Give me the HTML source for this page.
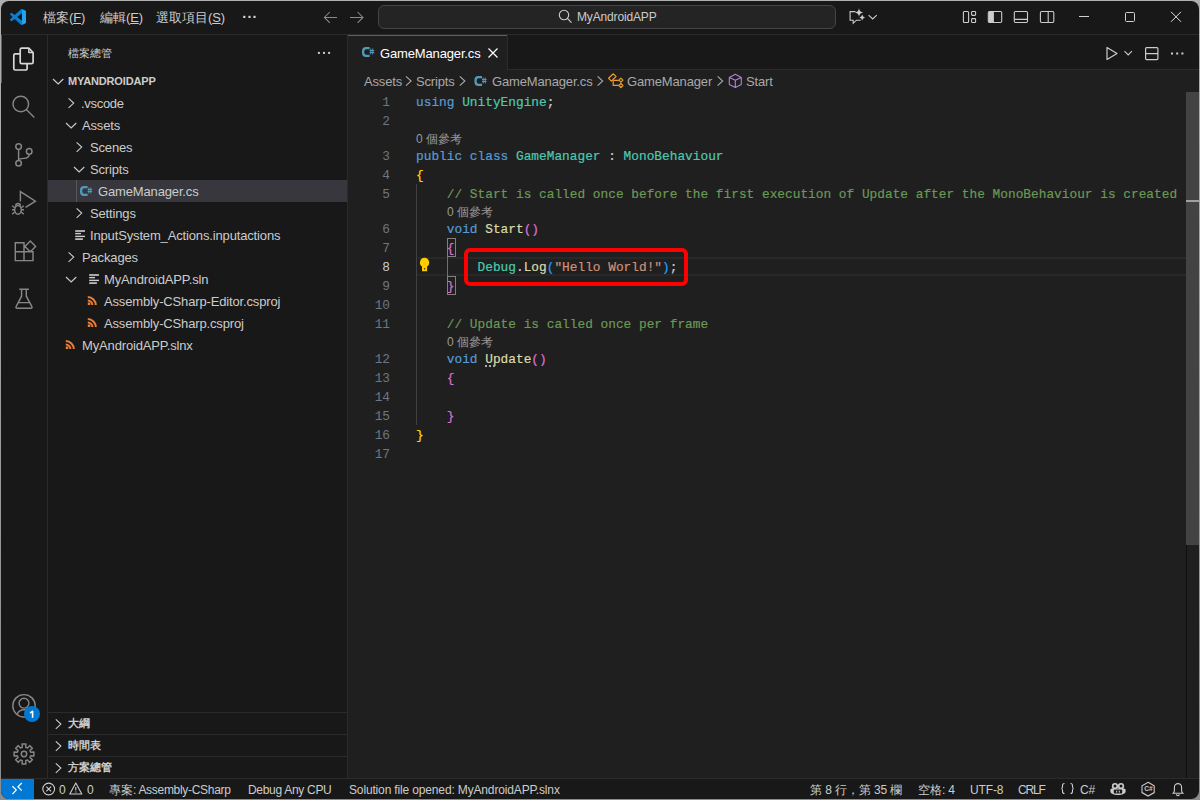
<!DOCTYPE html>
<html><head><meta charset="utf-8">
<style>
*{margin:0;padding:0;box-sizing:border-box}
html,body{width:1200px;height:800px;overflow:hidden;background:linear-gradient(#b0b0b0,#8c8c8c)}
body{font-family:"Liberation Sans",sans-serif;font-size:13px;color:#cccccc;position:relative;letter-spacing:-0.15px}
.mono{letter-spacing:0}
u{text-decoration-thickness:1px;text-underline-offset:1px}
.win{position:absolute;left:1px;top:1px;width:1198px;height:798px;background:#181818;border-radius:8px;overflow:hidden}
.c{position:absolute;left:-1px;top:-1px;width:1200px;height:800px}
.a{position:absolute;white-space:pre;line-height:1}
svg{position:absolute;overflow:visible}
.mono{font-family:"Liberation Mono",monospace}
.ic{fill:none;stroke:#868686;stroke-width:1.2}
.cj{display:inline-block;width:1em;letter-spacing:0;text-align:left}
.cg i{display:inline-block;width:7.7px;font-style:normal;overflow:visible}
.cg{-webkit-text-stroke:0.2px currentColor}
</style></head><body>
<div class="win"><div class="c">
<!-- ===== TITLE BAR ===== -->
<div class="a" style="left:0;top:34px;width:1200px;height:1px;background:#2b2b2b"></div>
<svg style="left:10px;top:9px" width="16" height="16" viewBox="0 0 100 100">
<path fill="#0a7dd0" d="M96.46 10.8L75.86.87a6.23 6.23 0 0 0-7.1 1.2L29.33 38.06 12.15 25.02a4.16 4.16 0 0 0-5.32.24L1.36 30.24a4.17 4.17 0 0 0 0 6.16L16.26 50 1.36 63.6a4.17 4.17 0 0 0 0 6.16l5.47 4.98a4.16 4.16 0 0 0 5.32.24l17.18-13.04 39.43 35.99a6.22 6.22 0 0 0 7.1 1.2l20.6-9.92A6.25 6.25 0 0 0 100 83.6V16.4a6.25 6.25 0 0 0-3.54-5.6zM75.02 72.7L45.1 50l29.92-22.7v45.4z"/>
<path fill="#22a3f0" d="M75.86.87L96.46 10.8A6.25 6.25 0 0 1 100 16.4V83.6a6.25 6.25 0 0 1-3.54 5.6L75.86 99.13a6.2 6.2 0 0 1-1 .3V.57a6.2 6.2 0 0 1 1 .3z"/>
</svg>
<div class="a" style="left:43px;top:11px;font-size:13px;color:#cccccc"><span class="cj">檔</span><span class="cj">案</span>(<u>F</u>)</div>
<div class="a" style="left:100px;top:11px;font-size:13px;color:#cccccc"><span class="cj">編</span><span class="cj">輯</span>(<u>E</u>)</div>
<div class="a" style="left:156px;top:11px;font-size:13px;color:#cccccc"><span class="cj">選</span><span class="cj">取</span><span class="cj">項</span><span class="cj">目</span>(<u>S</u>)</div>
<svg style="left:0;top:0" width="1" height="1"><g fill="#d0d0d0"><rect x="243.2" y="15.8" width="2.2" height="2.2"/><rect x="248.4" y="15.8" width="2.2" height="2.2"/><rect x="253.4" y="15.8" width="2.2" height="2.2"/></g>
<path d="M337 17.4H324.8M329.8 12L324.4 17.4 329.8 22.8M350 17.4H362.6M357.6 12L363 17.4 357.6 22.8" fill="none" stroke="#8b8b8b" stroke-width="1.05"/></svg>
<!-- search -->
<div class="a" style="left:378px;top:5px;width:458px;height:24px;border:1px solid #454545;background:#242424;border-radius:6px"></div>
<svg style="left:0;top:0" width="1" height="1"><circle cx="564" cy="15" r="4.7" fill="none" stroke="#cccccc" stroke-width="1.1"/><path d="M567.4 18.4L571.5 22.6" stroke="#cccccc" stroke-width="1.2"/></svg>
<div class="a" style="left:577px;top:11px;font-size:12px;color:#cccccc">MyAndroidAPP</div>
<!-- copilot -->
<svg style="left:0;top:0" width="1" height="1">
<path d="M855.5 11.6H850.1v8.6h3.1v3.1l3.2-3.1h4.3" fill="none" stroke="#cccccc" stroke-width="1.1"/>
<path d="M859 8.2Q859.5 12 863.2 12.5Q859.5 13 859 16.8Q858.5 13 854.8 12.5Q858.5 12 859 8.2z" fill="#cccccc"/>
<path d="M862.2 14.6Q862.6 17.1 865 17.5Q862.6 17.9 862.2 20.4Q861.8 17.9 859.4 17.5Q861.8 17.1 862.2 14.6z" fill="#cccccc"/>
<path d="M868.6 15.2l4.1 3.8 4.1-3.8" fill="none" stroke="#cccccc" stroke-width="1.1"/>
</svg>
<!-- layout icons -->
<svg style="left:0;top:0" width="1" height="1"><g fill="none" stroke="#cccccc" stroke-width="1.1">
<rect x="963.4" y="11.5" width="5.2" height="11" rx="1"/><rect x="971.6" y="11.5" width="4" height="3.9" rx=".8"/><rect x="971.6" y="18.6" width="4" height="3.9" rx=".8"/>
<rect x="988.3" y="11.5" width="13.4" height="11" rx="1.2"/>
<rect x="1014.3" y="11.5" width="13.2" height="11" rx="1.2"/><path d="M1014.5 19.4H1027.3"/>
<rect x="1040.4" y="11.5" width="13.4" height="11" rx="1.2"/><path d="M1048.2 11.7V22.3"/>
</g><rect x="988.6" y="11.8" width="5.3" height="10.4" fill="#cccccc"/></svg>
<!-- window controls -->
<div class="a" style="left:1079px;top:16px;width:10px;height:1px;background:#d0d0d0"></div>
<div class="a" style="left:1125px;top:12px;width:10px;height:10px;border:1px solid #d0d0d0;border-radius:1.5px"></div>
<svg style="left:0;top:0" width="1" height="1"><path d="M1171 11.8l10 10M1181 11.8l-10 10" stroke="#e0e0e0" stroke-width="1"/></svg>

<!-- ===== ACTIVITY BAR ===== -->
<div class="a" style="left:47px;top:35px;width:1px;height:743px;background:#2b2b2b"></div>
<div class="a" style="left:0;top:35px;width:2px;height:48px;background:#0078d4"></div>
<svg style="left:0;top:0" width="1" height="1"><g fill="none" stroke="#d7d7d7" stroke-width="1.7" stroke-linejoin="round"><path d="M21.7 48.2H28.8L33.1 52.5V62.2A1.5 1.5 0 0 1 31.6 63.7H21.7A1.5 1.5 0 0 1 20.2 62.2V49.7A1.5 1.5 0 0 1 21.7 48.2Z"/><path d="M28.8 48.2V52.5H33.1" stroke-width="1.4"/><path d="M20.2 53.9H15.3A1.5 1.5 0 0 0 13.8 55.4V68.5A1.5 1.5 0 0 0 15.3 70H25.6A1.5 1.5 0 0 0 27.1 68.5V63.7"/></g></svg>
<svg style="left:0;top:0" width="48" height="800">
<g fill="none" stroke="#868686" stroke-width="1.45">
<circle cx="20.8" cy="104" r="7.8"/><path d="M26.3 109.5L34.3 117.6"/>
<circle cx="18.6" cy="146.6" r="2.8"/><circle cx="29.2" cy="151.4" r="2.8"/><circle cx="18.6" cy="163.2" r="2.8"/><path d="M18.6 149.4V160.4M29.2 154.2c0 3-2.5 4-5.5 4.2-3 .2-5 .6-5.1 2"/>
<path d="M20.4 201.4V191.6L35.4 201.2 25.6 207.4"/>
<ellipse cx="18" cy="209.8" rx="3.3" ry="4.4"/><path d="M15.6 205.8a2.4 2.4 0 0 1 4.8 0M14.7 207.8L12.2 205.8M14.7 209.8H12M14.7 212L12.2 214.2M21.3 207.8L23.8 205.8M21.3 209.8H24M21.3 212L23.8 214.2"/>
<path d="M15.3 242.8H24V260.6H15.3zM15.3 251.8H33V260.6H24M30.3 241l5.3 5.4-5.3 5.4-5.4-5.4z"/>
<path d="M19.3 289.2H28.9M21.6 289.2V296.2L16.1 306.6A1 1 0 0 0 17 308.2H31A1 1 0 0 0 31.9 306.6L26.3 296.2V289.2M18.7 302.6H29.3"/>
<circle cx="24" cy="705.8" r="11.2"/><circle cx="24" cy="703.2" r="4.9"/><path d="M16.9 714.3c1.5-3 4-4.6 7.1-4.6s5.6 1.6 7.1 4.6"/>
<path d="M22.33 747.30 L22.07 744.09 L25.93 744.09 L25.67 747.30 L27.55 748.09 L29.65 745.63 L32.37 748.35 L29.91 750.45 L30.70 752.33 L33.91 752.07 L33.91 755.93 L30.70 755.67 L29.91 757.55 L32.37 759.65 L29.65 762.37 L27.55 759.91 L25.67 760.70 L25.93 763.91 L22.07 763.91 L22.33 760.70 L20.45 759.91 L18.35 762.37 L15.63 759.65 L18.09 757.55 L17.30 755.67 L14.09 755.93 L14.09 752.07 L17.30 752.33 L18.09 750.45 L15.63 748.35 L18.35 745.63 L20.45 748.09Z" stroke-linejoin="round"/><circle cx="24" cy="754" r="2.7"/>
</g>
<circle cx="32" cy="714" r="8" fill="#0078d4"/>
</svg>
<svg style="left:0;top:0" width="1" height="1"><path d="M32.6 717.8V711.4L30.1 713" fill="none" stroke="#ffffff" stroke-width="1.6" stroke-linejoin="round"/></svg>

<!-- ===== SIDEBAR ===== -->
<div class="a" style="left:347px;top:35px;width:1px;height:743px;background:#2b2b2b"></div>
<div class="a" style="left:68px;top:48px;font-size:11px;color:#cccccc"><span class="cj">檔</span><span class="cj">案</span><span class="cj">總</span><span class="cj">管</span></div>
<svg style="left:0;top:0" width="1" height="1"><g fill="#cccccc"><rect x="317.9" y="51.9" width="2" height="2"/><rect x="323" y="51.9" width="2" height="2"/><rect x="328.1" y="51.9" width="2" height="2"/></g></svg>

<!-- tree -->
<div class="a" style="left:48px;top:180px;width:299px;height:22px;background:#37373d"></div>
<div class="a" style="left:76px;top:180px;width:1px;height:22px;background:#585858"></div>
<svg style="left:0;top:0" width="348" height="800">
<g fill="none" stroke="#cccccc" stroke-width="1.1">
<path d="M53 79l5.15 5 5.15-5"/><path d="M68.6 98.3l5.1 4.75-5.1 4.75"/><path d="M66 123l5.15 5 5.15-5"/><path d="M76.6 142.3l5.1 4.75-5.1 4.75"/><path d="M74 167l5.15 5 5.15-5"/><path d="M76.6 208.3l5.1 4.75-5.1 4.75"/><path d="M68.6 252.3l5.1 4.75-5.1 4.75"/><path d="M66 277l5.15 5 5.15-5"/>
</g>
<g fill="#cccccc">
<rect x="75.2" y="230.2" width="9.8" height="1.6"/><rect x="75.2" y="232.9" width="5.8" height="1.4"/><rect x="75.2" y="235.7" width="9.8" height="1.4"/><rect x="75.2" y="238.3" width="7.7" height="1.6"/>
<rect x="89.2" y="274.2" width="9.8" height="1.6"/><rect x="89.2" y="276.9" width="5.8" height="1.4"/><rect x="89.2" y="279.7" width="9.8" height="1.4"/><rect x="89.2" y="282.3" width="7.7" height="1.6"/>
</g>
<path fill="#ee7d35" transform="translate(87.8,296.8)" d="M0 5.800000000000001H2.5V8.3H0ZM0 2.70A5.6 5.6 0 0 1 5.6 8.3H3.6A3.6 3.6 0 0 0 0 4.70ZM0 -0.70A9 9 0 0 1 9 8.3H7A7 7 0 0 0 0 1.30Z"/><path fill="#ee7d35" transform="translate(87.8,318.8)" d="M0 5.800000000000001H2.5V8.3H0ZM0 2.70A5.6 5.6 0 0 1 5.6 8.3H3.6A3.6 3.6 0 0 0 0 4.70ZM0 -0.70A9 9 0 0 1 9 8.3H7A7 7 0 0 0 0 1.30Z"/><path fill="#ee7d35" transform="translate(65.8,340.8)" d="M0 5.800000000000001H2.5V8.3H0ZM0 2.70A5.6 5.6 0 0 1 5.6 8.3H3.6A3.6 3.6 0 0 0 0 4.70ZM0 -0.70A9 9 0 0 1 9 8.3H7A7 7 0 0 0 0 1.30Z"/>
<g transform="translate(80,186)"><path fill="#519aba" d="M7.6 0H4A4 4.2 0 0 0 0 4.2V5.8A4 4.2 0 0 0 4 10H7.6V7.7H4.3A2 2 0 0 1 2.3 5.7V4.3A2 2 0 0 1 4.3 2.3H7.6Z"/><path stroke="#519aba" stroke-width="1" d="M8.8 1.6V7.4M10.8 1.6V7.4M7.6 3.5H12.2M7.6 5.5H12.2"/></g>
<g fill="none" stroke="#cccccc" stroke-width="1.1">
<path d="M55.8 719.3l5.1 4.75-5.1 4.75"/><path d="M55.8 741.3l5.1 4.75-5.1 4.75"/><path d="M55.8 763.3l5.1 4.75-5.1 4.75"/></g>
</svg>
<div class="a" style="left:68px;top:76px;font-size:11px;font-weight:bold;color:#cccccc">MYANDROIDAPP</div>
<div class="a" style="left:81px;top:97px;letter-spacing:-0.3px">.vscode</div>
<div class="a" style="left:82px;top:119px">Assets</div>
<div class="a" style="left:90px;top:141px">Scenes</div>
<div class="a" style="left:90px;top:163px">Scripts</div>
<div class="a" style="left:98px;top:185px">GameManager.cs</div>
<div class="a" style="left:90px;top:207px">Settings</div>
<div class="a" style="left:90px;top:229px">InputSystem_Actions.inputactions</div>
<div class="a" style="left:82px;top:251px">Packages</div>
<div class="a" style="left:104px;top:273px">MyAndroidAPP.sln</div>
<div class="a" style="left:104px;top:295px">Assembly-CSharp-Editor.csproj</div>
<div class="a" style="left:104px;top:317px">Assembly-CSharp.csproj</div>
<div class="a" style="left:82px;top:339px">MyAndroidAPP.slnx</div>
<!-- bottom panes -->
<div class="a" style="left:48px;top:712px;width:299px;height:1px;background:#2b2b2b"></div>
<div class="a" style="left:48px;top:734px;width:299px;height:1px;background:#2b2b2b"></div>
<div class="a" style="left:48px;top:756px;width:299px;height:1px;background:#2b2b2b"></div>
<div class="a" style="left:68px;top:718px;font-size:11px;font-weight:bold"><span class="cj">大</span><span class="cj">綱</span></div>
<div class="a" style="left:68px;top:740px;font-size:11px;font-weight:bold"><span class="cj">時</span><span class="cj">間</span><span class="cj">表</span></div>
<div class="a" style="left:68px;top:762px;font-size:11px;font-weight:bold"><span class="cj">方</span><span class="cj">案</span><span class="cj">總</span><span class="cj">管</span></div>

<!-- ===== EDITOR ===== -->
<div class="a" style="left:348px;top:69px;width:852px;height:1px;background:#2b2b2b"></div>
<div class="a" style="left:348px;top:70px;width:852px;height:708px;background:#1f1f1f"></div>
<div class="a" style="left:348px;top:35px;width:159px;height:35px;background:#1f1f1f;border-top:1px solid #0078d4"></div>
<div class="a" style="left:507px;top:35px;width:1px;height:35px;background:#2b2b2b"></div>
<svg style="left:0;top:0" width="1200" height="100">
<g transform="translate(362,47)"><path fill="#519aba" d="M7.6 0H4A4 4.2 0 0 0 0 4.2V5.8A4 4.2 0 0 0 4 10H7.6V7.7H4.3A2 2 0 0 1 2.3 5.7V4.3A2 2 0 0 1 4.3 2.3H7.6Z"/><path stroke="#519aba" stroke-width="1" d="M8.8 1.6V7.4M10.8 1.6V7.4M7.6 3.5H12.2M7.6 5.5H12.2"/></g>
<path d="M488.5 48.5l9 9M497.5 48.5l-9 9" stroke="#ffffff" stroke-width="1.2"/>
<path d="M1107 47.5v12l10-6z" fill="none" stroke="#cccccc" stroke-width="1.2" stroke-linejoin="round"/>
<path d="M1124.5 51.2l3.7 3.7 3.7-3.7" fill="none" stroke="#cccccc" stroke-width="1.1"/>
<rect x="1145.6" y="47.6" width="12.3" height="12" rx="1" fill="none" stroke="#cccccc" stroke-width="1.2"/>
<path d="M1146 53.6h12" stroke="#cccccc" stroke-width="1.2"/>
<g fill="#cccccc"><rect x="1171" y="52.5" width="2" height="2"/><rect x="1176.2" y="52.5" width="2" height="2"/><rect x="1181.4" y="52.5" width="2" height="2"/></g>
<!-- breadcrumbs -->
<g fill="none" stroke="#a9a9a9" stroke-width="1.1">
<path d="M406 76.3l5.1 4.7-5.1 4.7M459.8 76.3l5.1 4.7-5.1 4.7M597.6 76.3l5.1 4.7-5.1 4.7M717.6 76.3l5.1 4.7-5.1 4.7"/>
</g>
<g transform="translate(474.4,76)"><path fill="#519aba" d="M7.6 0H4A4 4.2 0 0 0 0 4.2V5.8A4 4.2 0 0 0 4 10H7.6V7.7H4.3A2 2 0 0 1 2.3 5.7V4.3A2 2 0 0 1 4.3 2.3H7.6Z"/><path stroke="#519aba" stroke-width="1" d="M8.8 1.6V7.4M10.8 1.6V7.4M7.6 3.5H12.2M7.6 5.5H12.2"/></g>
<g fill="none" stroke="#ee9d28" stroke-width="1.2" stroke-linejoin="round">
<path d="M608.6 78.3l4.7-4.5 2.7 2.7-4.6 4.6z"/>
<path d="M620.9 78.1l2 2-2 2-2-2z M620.9 83.5l2 2-2 2-2-2z"/>
<path d="M613.2 80.6V85.4H618.9M613.2 80.4H618.9"/>
</g>
<g fill="none" stroke="#b180d7" stroke-width="1.1" stroke-linejoin="round">
<path d="M735.3 74.3l6 3.1v7l-6 3-6-3v-7z M729.3 77.4l6 2.9 6-2.9 M735.3 80.3v7"/>
</g>
</svg>
<div class="a" style="left:380px;top:47px;font-size:13px;color:#ffffff">GameManager.cs</div>
<div class="a" style="left:364px;top:75px;font-size:13px;color:#a9a9a9">Assets</div>
<div class="a" style="left:416px;top:75px;font-size:13px;color:#a9a9a9">Scripts</div>
<div class="a" style="left:492px;top:75px;font-size:13px;color:#a9a9a9">GameManager.cs</div>
<div class="a" style="left:627px;top:75px;font-size:13px;color:#a9a9a9">GameManager</div>
<div class="a" style="left:746px;top:75px;font-size:13px;color:#a9a9a9">Start</div>

<!-- line highlight -->
<div class="a" style="left:417px;top:257px;width:769px;height:19px;border-top:2px solid #282828;border-bottom:2px solid #282828"></div>
<!-- indent guides -->
<div class="a" style="left:416px;top:184px;width:1px;height:241px;background:#404040"></div>
<div class="a" style="left:447px;top:256px;width:1px;height:21px;background:#707070"></div>
<!-- bracket match -->
<div class="a" style="left:447px;top:238px;width:9px;height:19px;border:1px solid #808080"></div>
<div class="a" style="left:447px;top:276px;width:9px;height:19px;border:1px solid #808080"></div>
<!-- lightbulb -->
<svg style="left:0;top:0" width="1" height="1"><path d="M424.6 257.8A4.7 4.7 0 0 0 422 266.4V271.2H427.1V266.4A4.7 4.7 0 0 0 424.6 257.8Z" fill="#ffcc00"/><rect x="424" y="268.2" width="1.2" height="1.2" fill="#1f1f1f"/></svg>
<!-- line numbers -->

<div class="a mono" style="left:349px;top:93px;width:41px;height:19px;text-align:right;font-size:12.8px;line-height:19px;color:#6e7681">1</div>
<div class="a mono" style="left:349px;top:112px;width:41px;height:19px;text-align:right;font-size:12.8px;line-height:19px;color:#6e7681">2</div>
<div class="a mono" style="left:349px;top:147px;width:41px;height:19px;text-align:right;font-size:12.8px;line-height:19px;color:#6e7681">3</div>
<div class="a mono" style="left:349px;top:166px;width:41px;height:19px;text-align:right;font-size:12.8px;line-height:19px;color:#6e7681">4</div>
<div class="a mono" style="left:349px;top:185px;width:41px;height:19px;text-align:right;font-size:12.8px;line-height:19px;color:#6e7681">5</div>
<div class="a mono" style="left:349px;top:220px;width:41px;height:19px;text-align:right;font-size:12.8px;line-height:19px;color:#6e7681">6</div>
<div class="a mono" style="left:349px;top:239px;width:41px;height:19px;text-align:right;font-size:12.8px;line-height:19px;color:#6e7681">7</div>
<div class="a mono" style="left:349px;top:258px;width:41px;height:19px;text-align:right;font-size:12.8px;line-height:19px;color:#cccccc">8</div>
<div class="a mono" style="left:349px;top:277px;width:41px;height:19px;text-align:right;font-size:12.8px;line-height:19px;color:#6e7681">9</div>
<div class="a mono" style="left:349px;top:296px;width:41px;height:19px;text-align:right;font-size:12.8px;line-height:19px;color:#6e7681">10</div>
<div class="a mono" style="left:349px;top:315px;width:41px;height:19px;text-align:right;font-size:12.8px;line-height:19px;color:#6e7681">11</div>
<div class="a mono" style="left:349px;top:350px;width:41px;height:19px;text-align:right;font-size:12.8px;line-height:19px;color:#6e7681">12</div>
<div class="a mono" style="left:349px;top:369px;width:41px;height:19px;text-align:right;font-size:12.8px;line-height:19px;color:#6e7681">13</div>
<div class="a mono" style="left:349px;top:388px;width:41px;height:19px;text-align:right;font-size:12.8px;line-height:19px;color:#6e7681">14</div>
<div class="a mono" style="left:349px;top:407px;width:41px;height:19px;text-align:right;font-size:12.8px;line-height:19px;color:#6e7681">15</div>
<div class="a mono" style="left:349px;top:426px;width:41px;height:19px;text-align:right;font-size:12.8px;line-height:19px;color:#6e7681">16</div>
<div class="a mono" style="left:349px;top:445px;width:41px;height:19px;text-align:right;font-size:12.8px;line-height:19px;color:#6e7681">17</div>
<div class="a mono cg" style="left:416px;top:93px;height:19px;font-size:12.8px;line-height:19px"><span style="color:#569cd6"><i>u</i><i>s</i><i>i</i><i>n</i><i>g</i></span><i> </i><span style="color:#4ec9b0"><i>U</i><i>n</i><i>i</i><i>t</i><i>y</i><i>E</i><i>n</i><i>g</i><i>i</i><i>n</i><i>e</i></span><span style="color:#cccccc"><i>;</i></span></div>
<div class="a mono cg" style="left:416px;top:147px;height:19px;font-size:12.8px;line-height:19px"><span style="color:#569cd6"><i>p</i><i>u</i><i>b</i><i>l</i><i>i</i><i>c</i></span><i> </i><span style="color:#569cd6"><i>c</i><i>l</i><i>a</i><i>s</i><i>s</i></span><i> </i><span style="color:#4ec9b0"><i>G</i><i>a</i><i>m</i><i>e</i><i>M</i><i>a</i><i>n</i><i>a</i><i>g</i><i>e</i><i>r</i></span><span style="color:#cccccc"><i> </i><i>:</i><i> </i></span><span style="color:#4ec9b0"><i>M</i><i>o</i><i>n</i><i>o</i><i>B</i><i>e</i><i>h</i><i>a</i><i>v</i><i>i</i><i>o</i><i>u</i><i>r</i></span></div>
<div class="a mono cg" style="left:416px;top:166px;height:19px;font-size:12.8px;line-height:19px"><span style="color:#ffd700"><i>{</i></span></div>
<div class="a mono cg" style="left:416px;top:185px;height:19px;font-size:12.8px;line-height:19px"><i> </i><i> </i><i> </i><i> </i><span style="color:#6a9955"><i>/</i><i>/</i><i> </i><i>S</i><i>t</i><i>a</i><i>r</i><i>t</i><i> </i><i>i</i><i>s</i><i> </i><i>c</i><i>a</i><i>l</i><i>l</i><i>e</i><i>d</i><i> </i><i>o</i><i>n</i><i>c</i><i>e</i><i> </i><i>b</i><i>e</i><i>f</i><i>o</i><i>r</i><i>e</i><i> </i><i>t</i><i>h</i><i>e</i><i> </i><i>f</i><i>i</i><i>r</i><i>s</i><i>t</i><i> </i><i>e</i><i>x</i><i>e</i><i>c</i><i>u</i><i>t</i><i>i</i><i>o</i><i>n</i><i> </i><i>o</i><i>f</i><i> </i><i>U</i><i>p</i><i>d</i><i>a</i><i>t</i><i>e</i><i> </i><i>a</i><i>f</i><i>t</i><i>e</i><i>r</i><i> </i><i>t</i><i>h</i><i>e</i><i> </i><i>M</i><i>o</i><i>n</i><i>o</i><i>B</i><i>e</i><i>h</i><i>a</i><i>v</i><i>i</i><i>o</i><i>u</i><i>r</i><i> </i><i>i</i><i>s</i><i> </i><i>c</i><i>r</i><i>e</i><i>a</i><i>t</i><i>e</i><i>d</i></span></div>
<div class="a mono cg" style="left:416px;top:220px;height:19px;font-size:12.8px;line-height:19px"><i> </i><i> </i><i> </i><i> </i><span style="color:#569cd6"><i>v</i><i>o</i><i>i</i><i>d</i></span><i> </i><span style="color:#dcdcaa"><i>S</i><i>t</i><i>a</i><i>r</i><i>t</i></span><span style="color:#da70d6"><i>(</i><i>)</i></span></div>
<div class="a mono cg" style="left:416px;top:239px;height:19px;font-size:12.8px;line-height:19px"><i> </i><i> </i><i> </i><i> </i><span style="color:#da70d6"><i>{</i></span></div>
<div class="a mono cg" style="left:416px;top:258px;height:19px;font-size:12.8px;line-height:19px"><i> </i><i> </i><i> </i><i> </i><i> </i><i> </i><i> </i><i> </i><span style="color:#4ec9b0"><i>D</i><i>e</i><i>b</i><i>u</i><i>g</i></span><span style="color:#cccccc"><i>.</i></span><span style="color:#dcdcaa"><i>L</i><i>o</i><i>g</i></span><span style="color:#179fff"><i>(</i></span><span style="color:#ce9178"><i>&quot;</i><i>H</i><i>e</i><i>l</i><i>l</i><i>o</i><i> </i><i>W</i><i>o</i><i>r</i><i>l</i><i>d</i><i>!</i><i>&quot;</i></span><span style="color:#179fff"><i>)</i></span><span style="color:#cccccc"><i>;</i></span></div>
<div class="a mono cg" style="left:416px;top:277px;height:19px;font-size:12.8px;line-height:19px"><i> </i><i> </i><i> </i><i> </i><span style="color:#da70d6"><i>}</i></span></div>
<div class="a mono cg" style="left:416px;top:315px;height:19px;font-size:12.8px;line-height:19px"><i> </i><i> </i><i> </i><i> </i><span style="color:#6a9955"><i>/</i><i>/</i><i> </i><i>U</i><i>p</i><i>d</i><i>a</i><i>t</i><i>e</i><i> </i><i>i</i><i>s</i><i> </i><i>c</i><i>a</i><i>l</i><i>l</i><i>e</i><i>d</i><i> </i><i>o</i><i>n</i><i>c</i><i>e</i><i> </i><i>p</i><i>e</i><i>r</i><i> </i><i>f</i><i>r</i><i>a</i><i>m</i><i>e</i></span></div>
<div class="a mono cg" style="left:416px;top:350px;height:19px;font-size:12.8px;line-height:19px"><i> </i><i> </i><i> </i><i> </i><span style="color:#569cd6"><i>v</i><i>o</i><i>i</i><i>d</i></span><i> </i><span style="color:#dcdcaa"><i>U</i><i>p</i><i>d</i><i>a</i><i>t</i><i>e</i></span><span style="color:#da70d6"><i>(</i><i>)</i></span></div>
<div class="a mono cg" style="left:416px;top:369px;height:19px;font-size:12.8px;line-height:19px"><i> </i><i> </i><i> </i><i> </i><span style="color:#da70d6"><i>{</i></span></div>
<div class="a mono cg" style="left:416px;top:407px;height:19px;font-size:12.8px;line-height:19px"><i> </i><i> </i><i> </i><i> </i><span style="color:#da70d6"><i>}</i></span></div>
<div class="a mono cg" style="left:416px;top:426px;height:19px;font-size:12.8px;line-height:19px"><span style="color:#ffd700"><i>}</i></span></div>
<div class="a" style="left:416px;top:131px;height:16px;font-size:12px;line-height:16px;color:#999999">0 <span class="cj">個</span><span class="cj">參</span><span class="cj">考</span></div>
<div class="a" style="left:447px;top:204px;height:16px;font-size:12px;line-height:16px;color:#999999">0 <span class="cj">個</span><span class="cj">參</span><span class="cj">考</span></div>
<div class="a" style="left:447px;top:334px;height:16px;font-size:12px;line-height:16px;color:#999999">0 <span class="cj">個</span><span class="cj">參</span><span class="cj">考</span></div>

<div class="a" style="left:485px;top:365px;width:2px;height:2px;background:#aaaaaa"></div><div class="a" style="left:489px;top:365px;width:2px;height:2px;background:#aaaaaa"></div><div class="a" style="left:493px;top:365px;width:2px;height:2px;background:#aaaaaa"></div>
<!-- red box -->
<div class="a" style="left:464px;top:248px;width:224px;height:38px;border:4px solid #ff0000;border-radius:6px"></div>
<!-- scrollbar -->
<div class="a" style="left:1186px;top:92px;width:1px;height:686px;background:#0d0f12"></div>
<div class="a" style="left:1186px;top:92px;width:13px;height:453px;background:#434343"></div>
<div class="a" style="left:1186px;top:200px;width:13px;height:2px;background:#a0a0a0"></div>

<!-- ===== STATUS BAR ===== -->
<div class="a" style="left:0;top:778px;width:1200px;height:1px;background:#2b2b2b"></div>
<div class="a" style="left:0;top:779px;width:34px;height:21px;background:#0078d4"></div>
<svg style="left:0;top:0" width="1200" height="800">
<path d="M12.4 786.2l3.9 3.8-3.9 4.1M21.8 783l-3.9 3.8 3.9 3.8" fill="none" stroke="#ffffff" stroke-width="1.2"/>
<g fill="none" stroke="#cccccc" stroke-width="1.1">
<circle cx="48.7" cy="789" r="5.9"/><path d="M46.3 786.6l4.8 4.8M51.1 786.6l-4.8 4.8"/>
<path d="M75.8 783l6 11h-12z" stroke-linejoin="round"/><path d="M75.8 787v3.6M75.8 791.6v1"/>
<path d="M1064.5 783.5c-1.5 0-2 .5-2 2v1.3c0 1-.5 1.7-1.2 1.7.7 0 1.2.7 1.2 1.7v1.3c0 1.5.5 2 2 2M1070.5 783.5c1.5 0 2 .5 2 2v1.3c0 1 .5 1.7 1.2 1.7-.7 0-1.2.7-1.2 1.7v1.3c0 1.5-.5 2-2 2"/>
<path d="M1148.1 782.3l6.1 3.5v6.8l-6.1 3.5-6.1-3.5v-6.8z"/>
<path d="M1179.5 793.2h-6.3c.7-.7 1.2-1.5 1.2-2.7v-3.3a3.6 3.6 0 0 1 7.2 0v3.3c0 1.2.5 2 1.2 2.7h-3.3zM1176.5 794.2a1.4 1.4 0 0 0 2.8 0"/>
</g>
<g fill="#cccccc">
<circle cx="1115" cy="786.2" r="3.1"/><circle cx="1121" cy="786.2" r="3.1"/>
<path d="M1112 788.5h12c1 0 1.6.8 1.6 1.8v1.4c0 1.6-3.5 3.3-7.6 3.3s-7.6-1.7-7.6-3.3v-1.4c0-1 .6-1.8 1.6-1.8z"/>
</g>
<g fill="#181818"><circle cx="1115" cy="786" r="1.5"/><circle cx="1121" cy="786" r="1.5"/><rect x="1113.8" y="789.6" width="8.4" height="3.8" rx="1"/></g>
<g fill="#cccccc"><rect x="1116.2" y="790.6" width="1" height="2"/><rect x="1118.8" y="790.6" width="1" height="2"/></g>
</svg>
<div class="a" style="left:1144.2px;top:785.5px;font-size:6.5px;font-weight:bold;color:#ccc;letter-spacing:0">C#</div>
<div class="a" style="left:59px;top:784px;font-size:12px">0</div>
<div class="a" style="left:87px;top:784px;font-size:12px">0</div>
<div class="a" style="left:109px;top:784px;font-size:12px;letter-spacing:-0.3px"><span class="cj">專</span><span class="cj">案</span>: Assembly-CSharp</div>
<div class="a" style="left:248px;top:784px;font-size:12px;letter-spacing:-0.3px">Debug Any CPU</div>
<div class="a" style="left:349px;top:784px;font-size:12px">Solution file opened: MyAndroidAPP.slnx</div>
<div class="a" style="left:810px;top:784px;font-size:12px"><span class="cj">第</span> 8 <span class="cj">行</span><span class="cj">，</span><span class="cj">第</span> 35 <span class="cj">欄</span></div>
<div class="a" style="left:918px;top:784px;font-size:12px"><span class="cj">空</span><span class="cj">格</span>: 4</div>
<div class="a" style="left:970px;top:784px;font-size:12px">UTF-8</div>
<div class="a" style="left:1018px;top:784px;font-size:12px;letter-spacing:-1.2px">CRLF</div>
<div class="a" style="left:1080px;top:784px;font-size:12px">C#</div>
</div></div>
</body></html>
